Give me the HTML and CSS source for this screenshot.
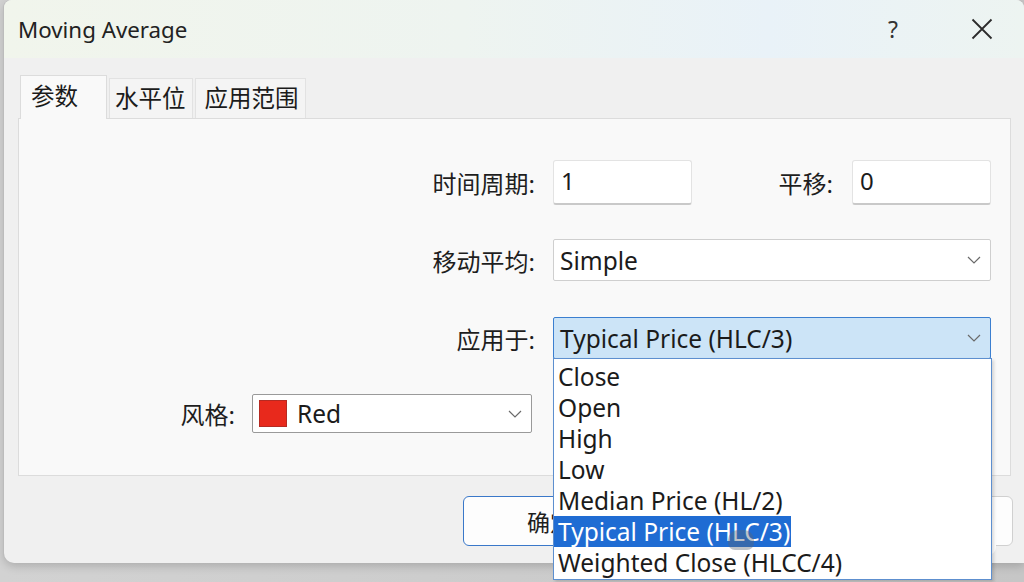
FILE: index.html
```html
<!DOCTYPE html>
<html lang="zh-CN">
<head>
    <meta charset="UTF-8">
    <meta name="viewport" content="width=device-width, initial-scale=1.0">
    <title>Moving Average</title>
    <link rel="stylesheet" href="styles.css">
</head>
<body>
    <div class="window">
        <!-- Title bar -->
        <div class="titlebar">
            <span class="title">Moving Average</span>
            <span class="title-btn help">?</span>
            <span class="title-btn close">
                <svg width="22" height="22" viewBox="0 0 22 22"><path d="M1.5 1.5 L20.5 20.5 M20.5 1.5 L1.5 20.5" stroke="#2b2b2b" stroke-width="1.8" fill="none"/></svg>
            </span>
        </div>

        <!-- Tabs -->
        <div class="tabs">
            <div class="tab active">参数</div>
            <div class="tab">水平位</div>
            <div class="tab">应用范围</div>
        </div>

        <!-- Parameters panel -->
        <div class="panel">
            <div class="row row-period">
                <span class="label">时间周期:</span>
                <div class="input">1</div>
                <span class="label label-shift">平移:</span>
                <div class="input">0</div>
            </div>
            <div class="row row-method">
                <span class="label">移动平均:</span>
                <div class="select">
                    <span>Simple</span>
                    <svg class="chevron" width="14" height="8" viewBox="0 0 14 8"><path d="M1 1 L7 7 L13 1" stroke="#6a6a6a" stroke-width="1.2" fill="none"/></svg>
                </div>
            </div>
            <div class="row row-apply">
                <span class="label">应用于:</span>
                <div class="select focused">
                    <span>Typical Price (HLC/3)</span>
                    <svg class="chevron" width="14" height="8" viewBox="0 0 14 8"><path d="M1 1 L7 7 L13 1" stroke="#6a6a6a" stroke-width="1.2" fill="none"/></svg>
                </div>
            </div>
            <div class="row row-style">
                <span class="label label-style">风格:</span>
                <div class="select select-style">
                    <span class="swatch"></span>
                    <span>Red</span>
                    <svg class="chevron" width="14" height="8" viewBox="0 0 14 8"><path d="M1 1 L7 7 L13 1" stroke="#6a6a6a" stroke-width="1.2" fill="none"/></svg>
                </div>
            </div>
        </div>

        <!-- Dialog buttons -->
        <div class="buttons">
            <button class="btn default">确定</button>
            <button class="btn">取消</button>
            <button class="btn">重置</button>
        </div>

        <!-- Open dropdown list of "应用于" -->
        <div class="dropdown">
            <div class="option">Close</div>
            <div class="option">Open</div>
            <div class="option">High</div>
            <div class="option">Low</div>
            <div class="option">Median Price (HL/2)</div>
            <div class="option"><span class="hl">Typical Price (HLC/3)</span></div>
            <div class="option">Weighted Close (HLCC/4)</div>
        </div>
        <div class="tip"></div>
        <div class="blob"></div>
    </div>
</body>
</html>
```

FILE: styles.css
```css
/* General */
body, html {
    margin: 0;
    padding: 0;
}
body {
    height: 582px;
    overflow: hidden;
    background: linear-gradient(90deg, #d2d2d2, #c6c6c6);
    font-family: "Noto Sans", "Noto Sans CJK SC", sans-serif;
    color: #1b1b1b;
}

/* Window */
.window {
    position: relative;
    margin-left: 4px;
    width: 1020px;
    height: 563px;
    background: #f0f0f0;
    border-radius: 8px 8px 0 10px;
    box-shadow: -1px 0 0 #bcbcbc, 0 3px 10px rgba(0, 0, 0, 0.18);
}

/* Title bar */
.titlebar {
    height: 58px;
    display: flex;
    align-items: center;
    padding-left: 14px;
    padding-right: 19px;
    border-radius: 8px 8px 0 0;
    background: linear-gradient(90deg, #f1f5ec 0%, #eef4f0 45%, #e9f2f8 75%, #edf4f1 100%);
}
.title {
    font-size: 22.3px;
    color: #222;
    margin-right: auto;
}
.title-btn {
    width: 46px;
    height: 40px;
    display: flex;
    justify-content: center;
    align-items: center;
}
.help {
    font-size: 23px;
    color: #333;
    margin-right: 43px;
}

/* Tabs */
.tabs {
    display: flex;
    align-items: flex-end;
    gap: 2px;
    margin: 17px 0 0 16px;
    height: 43px;
}
.tab {
    height: 40px;
    line-height: 38px;
    padding: 0 6px 0 5px;
    font-size: 23.5px;
    background: #f4f4f4;
    border: 1px solid #e2e2e2;
    border-bottom: none;
    box-sizing: border-box;
}
.tab:nth-child(3) {
    padding: 0 6px 0 9px;
}
.tab.active {
    height: 44px;
    line-height: 40px;
    padding: 0 28px 0 10px;
    background: #f9f9f9;
    border-color: #dcdcdc;
    position: relative;
    z-index: 1;
    margin-bottom: -1px;
}

/* Panel */
.panel {
    margin: 0 13px 0 14px;
    height: 358px;
    box-sizing: border-box;
    padding-top: 41px;
    background: #f9f9f9;
    border: 1px solid #dcdcdc;
}
.row {
    display: flex;
    align-items: center;
}
.row-period { height: 45px; }
.row-method { height: 42px; margin-top: 34px; }
.row-apply { height: 42px; margin-top: 36px; }
.row-style { height: 39px; margin-top: 35px; }

.label {
    width: 516px;
    margin-right: 18px;
    text-align: right;
    font-size: 24px;
    color: #1e1e1e;
}
.label-shift {
    width: 141px;
    margin-right: 19px;
}
.label-style {
    width: 216px;
    margin-right: 17px;
}

.input {
    width: 139px;
    height: 45px;
    box-sizing: border-box;
    padding-left: 7px;
    line-height: 40px;
    font-size: 24px;
    background: #fff;
    border: 1px solid #e3e3e3;
    border-bottom: 2px solid #c9c9c9;
    border-radius: 3px;
}

.select {
    width: 438px;
    height: 42px;
    box-sizing: border-box;
    display: flex;
    align-items: center;
    padding-left: 6px;
    font-size: 24.5px;
    background: #fff;
    border: 1px solid #cfcfcf;
    border-radius: 2px;
}
.select .chevron {
    margin-left: auto;
    margin-right: 9px;
}
.select.focused {
    background: #cce4f7;
    border-color: #3b7fd0;
}
.select-style {
    width: 280px;
    height: 39px;
    border-color: #9a9a9a;
}
.swatch {
    width: 28px;
    height: 27px;
    margin-right: 10px;
    background: #e8291c;
    box-shadow: inset 0 0 0 1px #b52a22;
}

/* Buttons */
.buttons {
    display: flex;
    justify-content: flex-end;
    gap: 14px;
    margin-top: 20px;
    padding-right: 11px;
}
.btn {
    width: 174px;
    height: 50px;
    font-family: "Noto Sans CJK SC", sans-serif;
    font-size: 23px;
    color: #1e1e1e;
    background: #fdfdfd;
    border: 1px solid #d0d0d0;
    border-radius: 6px;
}
.btn.default {
    border-color: #3a78c9;
}

/* Dropdown list */
.dropdown {
    position: absolute;
    left: 549px;
    top: 358px;
    width: 439px;
    height: 222px;
    box-sizing: border-box;
    padding-top: 2px;
    background: #fff;
    border: 1px solid #5d8fcf;
    box-shadow: 2px 2px 3px rgba(0, 0, 0, 0.15);
    z-index: 5;
}
.option {
    height: 31px;
    line-height: 31px;
    padding-left: 4px;
    font-size: 24.5px;
    color: #1b1b1b;
    white-space: nowrap;
}
.option:nth-child(6) {
    padding-left: 0;
}
.hl {
    display: inline-block;
    height: 31px;
    padding: 0 1px 0 4px;
    background: #1f6cd3;
    color: #fff;
}
.tip {
    position: absolute;
    left: 972px;
    top: 517px;
    width: 20px;
    height: 38px;
    background: #fff;
    border-radius: 0 8px 8px 0;
    z-index: 4;
}
.blob {
    position: absolute;
    left: 724px;
    top: 530px;
    width: 26px;
    height: 20px;
    border-radius: 10px 10px 7px 7px;
    background: #5a6676;
    opacity: 0.4;
    z-index: 6;
}
```
